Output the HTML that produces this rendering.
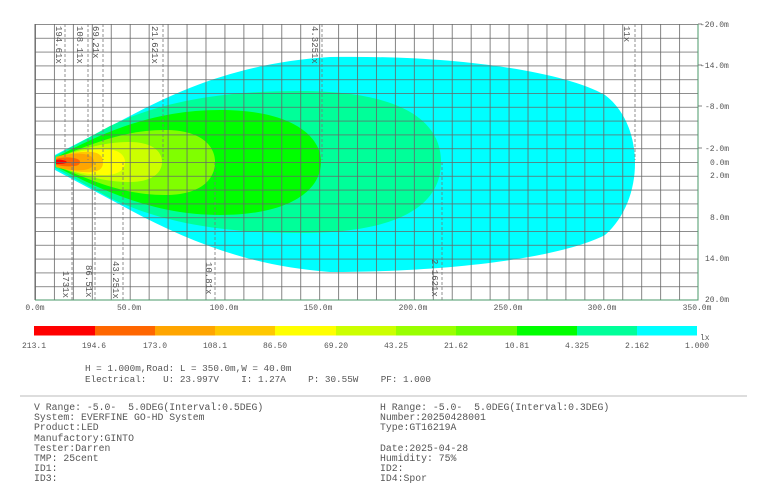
<!DOCTYPE html>
<html><head><meta charset="utf-8"><style>
html,body{margin:0;padding:0;background:#fff;width:768px;height:486px;overflow:hidden}
svg{display:block}
text{font-family:"Liberation Mono",monospace;fill:#555}
</style></head><body>
<svg width="768" height="486" viewBox="0 0 768 486" xmlns="http://www.w3.org/2000/svg">
<defs>
<pattern id="g" x="35" y="24" width="18.943" height="13.8" patternUnits="userSpaceOnUse">
<path d="M0.5,0V13.8M0,0.5H18.943" stroke="#666" stroke-width="0.8" fill="none"/>
</pattern>
</defs>
<!-- contours -->
<path d="M55,155 L130,116 C190,84 250,62 330,57 C450,55 560,70 605,95 C645,125 645,200 605,235 C560,258 450,272 330,272 C250,266 190,242 130,210 L55,170 Z" fill="#00ffff"/>
<path d="M55,156 L110,126 C160,102 220,91 300,91 C400,91 441,120 441,162 C441,205 400,233 300,233 C220,233 160,222 110,198 L55,168 Z" fill="#00ff99"/>
<path d="M57,157 C110,128 160,110 220,110 C290,110 321,135 321,162 C321,190 290,215 220,215 C160,215 110,195 57,167 Z" fill="#00ff00"/>
<path d="M57,158 C100,140 130,130 165,130 C200,130 215,145 215,162 C215,180 200,195 165,195 C130,195 100,185 57,166 Z" fill="#80ff00"/>
<path d="M57,158 C85,148 105,142 130,142 C150,142 162,150 162,162 C162,174 150,182 130,182 C105,182 85,176 57,166 Z" fill="#ccff00"/>
<path d="M57,158 C75,152 90,149 105,149 C118,149 125,155 125,162 C125,170 118,175 105,175 C90,175 75,172 57,166 Z" fill="#ffff00"/>
<path d="M56,157 C70,153 82,151 92,152 C100,153 103,157 103,162 C103,168 100,171 92,172 C82,173 70,171 56,167 Z" fill="#ffc800"/>
<path d="M56,157 C66,154 75,153 84,154 C91,155 94,158 94,162 C94,166 91,169 84,170 C75,171 66,170 56,167 Z" fill="#ffa500"/>
<path d="M56,159 C62,157 68,157 74,158 C78,159 80,160 80,162 C80,164 78,166 74,166 C68,167 62,166 56,165 Z" fill="#ff6600"/>
<path d="M56,160 C60,159 63,160 66,161 C67,162 67,163 66,163 C63,164 60,164 56,164 Z" fill="#ff0000"/>
<!-- grid -->
<rect x="35" y="24" width="663.5" height="276.5" fill="url(#g)"/>
<line x1="35" y1="24" x2="35" y2="300" stroke="#666" stroke-width="1"/>
<line x1="698" y1="24" x2="698" y2="300" stroke="#4a9a6a" stroke-width="1"/>
<line x1="35" y1="300" x2="698" y2="300" stroke="#4a9a6a" stroke-width="1"/>
<!-- dashed lines -->
<g stroke="#777" stroke-width="0.8" stroke-dasharray="3,2">
<line x1="65" y1="24" x2="65" y2="160"/>
<line x1="88" y1="24" x2="88" y2="160"/>
<line x1="103" y1="24" x2="103" y2="160"/>
<line x1="163" y1="24" x2="163" y2="160"/>
<line x1="322" y1="24" x2="322" y2="160"/>
<line x1="635" y1="24" x2="635" y2="160"/>
<line x1="72" y1="162" x2="72" y2="300"/>
<line x1="95" y1="162" x2="95" y2="300"/>
<line x1="123" y1="162" x2="123" y2="300"/>
<line x1="215" y1="162" x2="215" y2="300"/>
<line x1="442" y1="162" x2="442" y2="300"/>
</g>
<!-- vertical labels -->
<g font-size="9">
<text transform="translate(56,26) rotate(90)">194.61x</text>
<text transform="translate(77,26) rotate(90)">108.11x</text>
<text transform="translate(93,26) rotate(90)">69.21x</text>
<text transform="translate(152,26) rotate(90)">21.621x</text>
<text transform="translate(312,26) rotate(90)">4.3251x</text>
<text transform="translate(624,26) rotate(90)">11x</text>
<text transform="translate(63,271) rotate(90)">1731x</text>
<text transform="translate(86,265) rotate(90)">86.51x</text>
<text transform="translate(113,261) rotate(90)">43.251x</text>
<text transform="translate(206,262) rotate(90)">10.81x</text>
<text transform="translate(432,259) rotate(90)">2.1621x</text>
</g>
<!-- y axis labels -->
<g font-size="8">
<text x="700" y="27">-20.0m</text>
<text x="700" y="68">-14.0m</text>
<text x="705" y="109">-8.0m</text>
<text x="705" y="151">-2.0m</text>
<text x="710" y="165">0.0m</text>
<text x="710" y="178">2.0m</text>
<text x="710" y="220">8.0m</text>
<text x="705" y="261">14.0m</text>
<text x="705" y="302">20.0m</text>
</g>
<g stroke="#666" stroke-width="0.8">
<line x1="698" y1="24" x2="702" y2="24"/><line x1="698" y1="65" x2="702" y2="65"/>
<line x1="698" y1="106" x2="702" y2="106"/><line x1="698" y1="148" x2="702" y2="148"/>
</g>
<g font-size="8" text-anchor="middle">
<text x="35" y="310">0.0m</text>
<text x="129" y="310">50.0m</text>
<text x="224" y="310">100.0m</text>
<text x="318" y="310">150.0m</text>
<text x="413" y="310">200.0m</text>
<text x="508" y="310">250.0m</text>
<text x="602" y="310">300.0m</text>
<text x="697" y="310">350.0m</text>
</g>
<!-- color bar -->
<g>
<rect x="34" y="326" width="61" height="9.5" fill="#ff0000"/>
<rect x="95" y="326" width="61" height="9.5" fill="#ff6600"/>
<rect x="155" y="326" width="61" height="9.5" fill="#ffa500"/>
<rect x="215" y="326" width="61" height="9.5" fill="#ffc800"/>
<rect x="275" y="326" width="61" height="9.5" fill="#ffff00"/>
<rect x="336" y="326" width="61" height="9.5" fill="#ccff00"/>
<rect x="396" y="326" width="61" height="9.5" fill="#99ff00"/>
<rect x="456" y="326" width="61" height="9.5" fill="#66ff00"/>
<rect x="517" y="326" width="61" height="9.5" fill="#00ff00"/>
<rect x="577" y="326" width="61" height="9.5" fill="#00ff99"/>
<rect x="637" y="326" width="60" height="9.5" fill="#00ffff"/>
</g>
<text x="700" y="340" font-size="8">lx</text>
<g font-size="8" text-anchor="middle">
<text x="34" y="348">213.1</text>
<text x="94" y="348">194.6</text>
<text x="155" y="348">173.0</text>
<text x="215" y="348">108.1</text>
<text x="275" y="348">86.50</text>
<text x="336" y="348">69.20</text>
<text x="396" y="348">43.25</text>
<text x="456" y="348">21.62</text>
<text x="517" y="348">10.81</text>
<text x="577" y="348">4.325</text>
<text x="637" y="348">2.162</text>
<text x="697" y="348">1.000</text>
</g>
<g font-size="9.3">
<text x="85" y="371" xml:space="preserve">H = 1.000m,Road: L = 350.0m,W = 40.0m</text>
<text x="85" y="382" xml:space="preserve">Electrical:   U: 23.997V    I: 1.27A    P: 30.55W    PF: 1.000</text>
</g>
<line x1="20" y1="396" x2="747" y2="396" stroke="#bbb" stroke-width="1"/>
<g font-size="9.8">
<text x="34" y="410" xml:space="preserve">V Range: -5.0-  5.0DEG(Interval:0.5DEG)</text>
<text x="34" y="420">System: EVERFINE GO-HD System</text>
<text x="34" y="430">Product:LED</text>
<text x="34" y="441">Manufactory:GINTO</text>
<text x="34" y="451">Tester:Darren</text>
<text x="34" y="461">TMP: 25cent</text>
<text x="34" y="471">ID1:</text>
<text x="34" y="481">ID3:</text>
<text x="380" y="410" xml:space="preserve">H Range: -5.0-  5.0DEG(Interval:0.3DEG)</text>
<text x="380" y="420">Number:20250428001</text>
<text x="380" y="430">Type:GT16219A</text>
<text x="380" y="451">Date:2025-04-28</text>
<text x="380" y="461">Humidity: 75%</text>
<text x="380" y="471">ID2:</text>
<text x="380" y="481">ID4:Spor</text>
</g>
</svg>
</body></html>
